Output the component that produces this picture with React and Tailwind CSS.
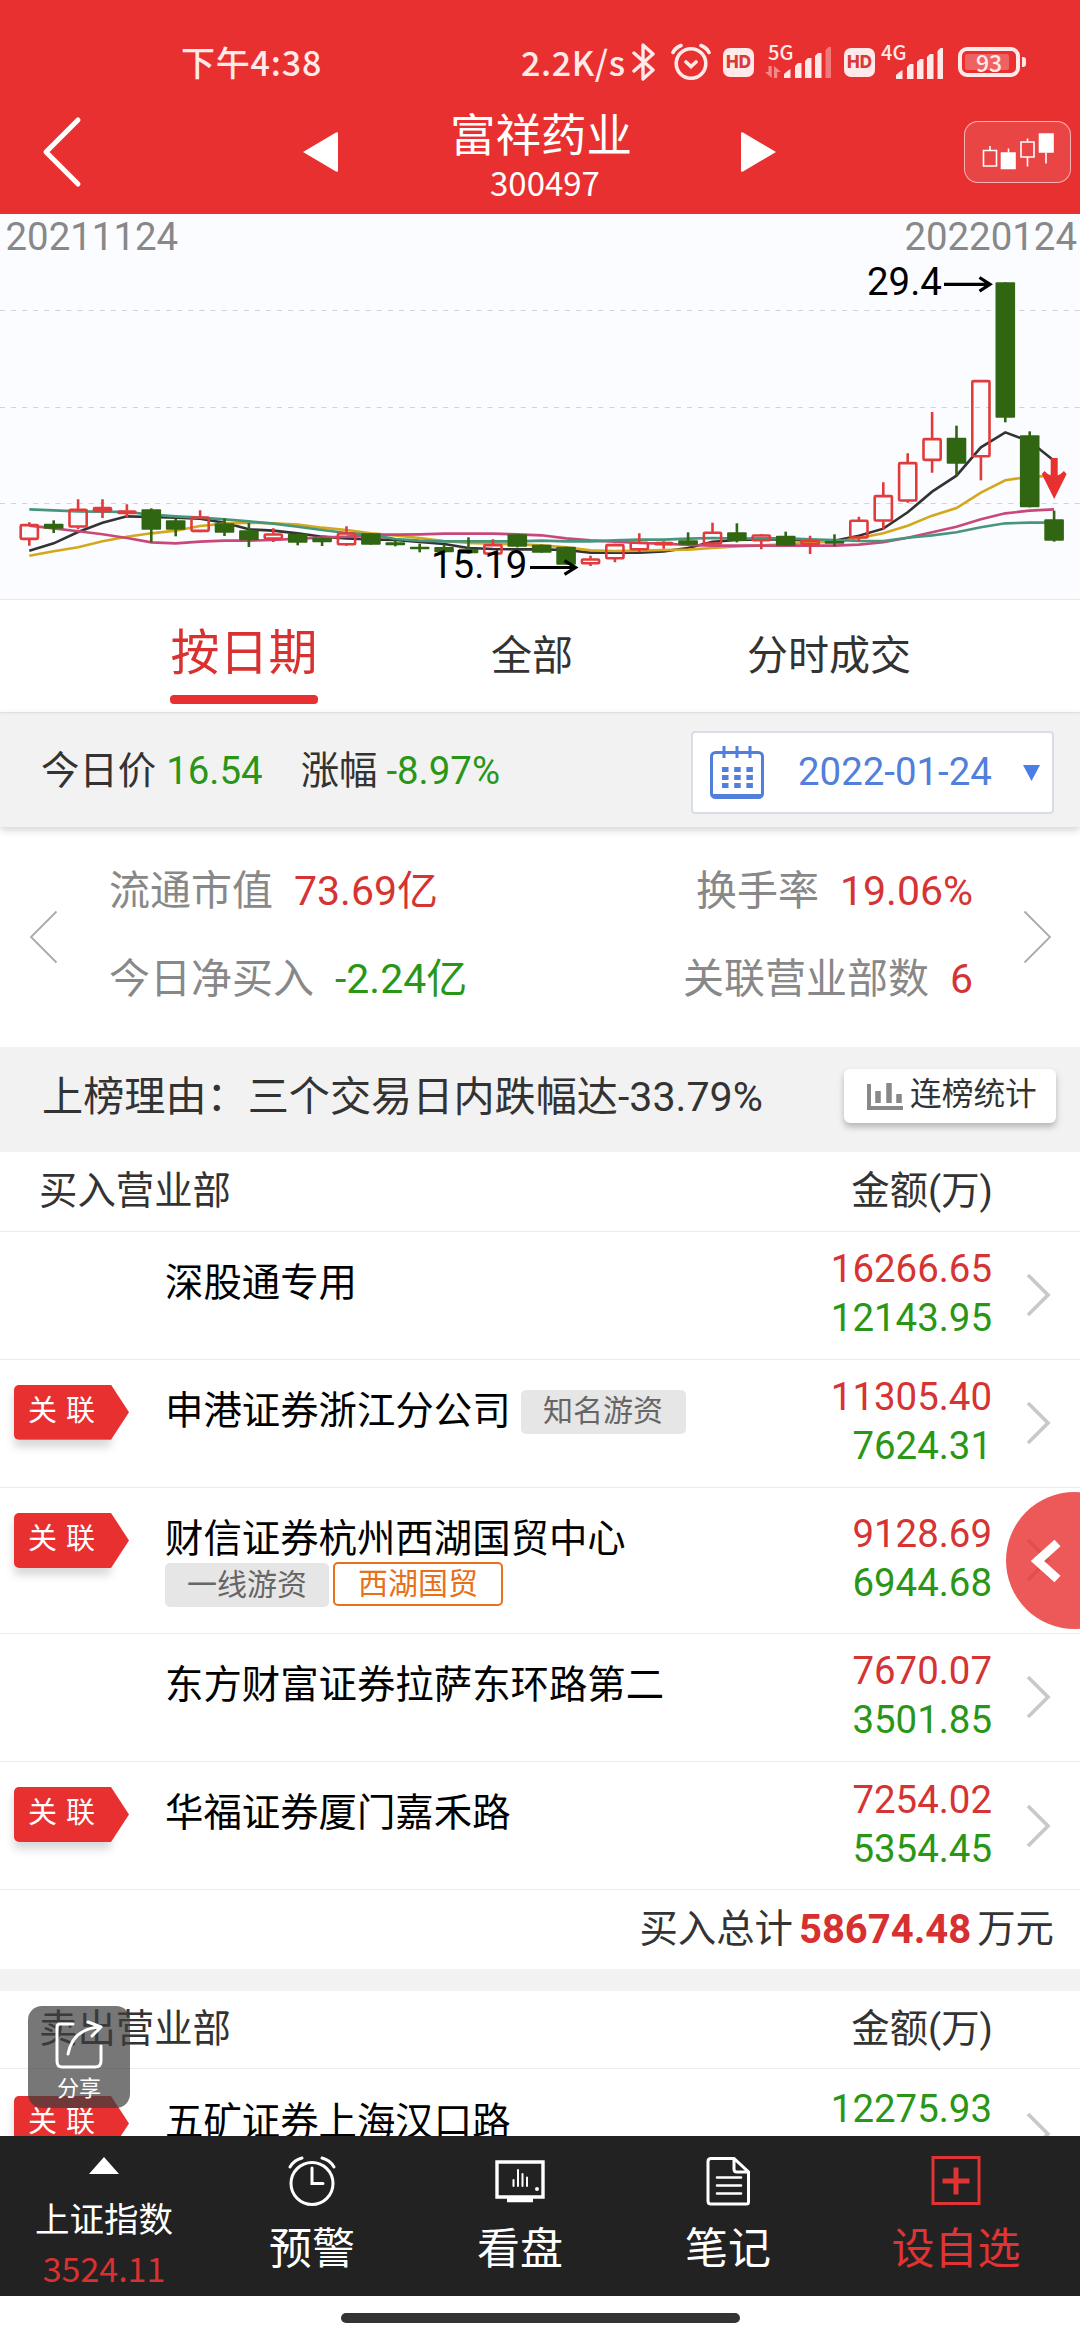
import React from "react";

// [body top, body bottom, high, low, rising]
const candles = [
  [943, 989, 937, 1007, 1], [941, 956, 931, 969, 0], [897, 952, 868, 958, 1], [892, 905, 868, 924, 1],
  [902, 911, 883, 922, 1], [898, 959, 895, 997, 0], [931, 959, 927, 979, 0], [920, 965, 901, 967, 1],
  [940, 968, 925, 978, 0], [961, 991, 939, 1011, 0], [971, 988, 955, 996, 1], [971, 998, 971, 1006, 0],
  [983, 997, 983, 1008, 0], [968, 1005, 949, 1007, 1], [970, 1004, 970, 1004, 0], [997, 1006, 989, 1009, 0],
  [1010, 1018, 1001, 1027, 0], [1011, 1027, 1003, 1029, 0], [1016, 1030, 982, 1031, 0], [1003, 1033, 988, 1035, 1],
  [973, 1010, 973, 1012, 0], [1004, 1028, 1004, 1028, 0], [1010, 1064, 1010, 1064, 0], [1046, 1062, 1037, 1068, 1],
  [1003, 1047, 1001, 1057, 1], [996, 1020, 970, 1027, 1], [997, 1003, 994, 1016, 1], [991, 1004, 967, 1006, 0],
  [966, 1003, 938, 1005, 1], [967, 993, 940, 997, 0], [974, 993, 972, 1018, 1], [977, 1007, 965, 1007, 0],
  [991, 1005, 977, 1032, 1], [993, 1001, 973, 1009, 0], [930, 985, 920, 994, 1], [856, 934, 817, 957, 1],
  [757, 874, 730, 878, 1], [685, 752, 606, 788, 1], [683, 761, 647, 797, 0], [511, 741, 511, 811, 1],
  [217, 623, 217, 637, 0], [676, 892, 664, 892, 0], [928, 992, 902, 995, 0],
];

const averages = [
  { color: "#333333", pts: [1022, 1000, 966, 938, 919, 921, 923, 926, 938, 958, 962, 970, 980, 985, 988, 990, 996, 1002, 1014, 1017, 1018, 1018, 1020, 1028, 1028, 1028, 1024, 1014, 995, 990, 988, 988, 992, 992, 977, 956, 907, 845, 797, 712, 667, 694, 752] },
  { color: "#d4a81c", pts: [1037, 1024, 1012, 994, 980, 970, 962, 948, 941, 938, 940, 944, 953, 960, 970, 976, 984, 993, 999, 1001, 1003, 1006, 1012, 1021, 1023, 1022, 1020, 1019, 1014, 1009, 1006, 1003, 997, 996, 984, 970, 947, 917, 894, 848, 811, 800, 798] },
  { color: "#c9487c", pts: [947, 955, 964, 973, 984, 997, 1000, 995, 992, 992, 990, 986, 983, 980, 975, 974, 973, 971, 971, 971, 973, 976, 985, 991, 995, 999, 1001, 1005, 1007, 1007, 1007, 1007, 1007, 1007, 1004, 997, 983, 967, 950, 928, 910, 902, 898] },
  { color: "#47967c", pts: [898, 901, 904, 905, 906, 914, 919, 923, 928, 934, 941, 950, 960, 969, 974, 987, 992, 994, 994, 994, 994, 992, 994, 994, 991, 989, 989, 986, 984, 986, 985, 985, 988, 990, 993, 993, 983, 976, 967, 952, 940, 938, 938] },
];

const cx = (i) => 29.3 + 24.4 * i;
const cy = (v) => v / 3 - 4;

function Chart() {
  return (
    <svg className="block h-[386px] w-[1080px] shrink-0 bg-[#fbfcff]" viewBox="0 0 1080 386" fontFamily="Roboto, sans-serif" fontSize="38.4">
      {[96.5, 193.5, 289.5].map((y) => (
        <line key={y} x1="0" x2="1080" y1={y} y2={y} stroke="#cfd2d8" strokeWidth="1" strokeDasharray="5 6.08" />
      ))}
      <line x1="0" x2="1080" y1="385.5" y2="385.5" stroke="#e6e8ec" />
      {averages.map((a) => (
        <polyline key={a.color} fill="none" stroke={a.color} strokeWidth="2.6" points={a.pts.map((v, i) => `${cx(i)},${cy(v)}`).join(" ")} />
      ))}
      {candles.map(([t, b, h, l, up], i) =>
        up ? (
          <g key={i} stroke="#e23b3b" fill="none">
            <path strokeWidth="2.6" d={`M${cx(i)} ${cy(h)}V${cy(t)}M${cx(i)} ${cy(b)}V${cy(l)}`} />
            <rect strokeWidth="2.6" rx="1" x={cx(i) - 8.6} width="17.2" y={cy(t) + 0.8} height={Math.max(cy(b) - cy(t) - 1.6, 1)} />
          </g>
        ) : (
          <g key={i} fill="#306612">
            <rect x={cx(i) - 1.3} width="2.6" y={cy(h)} height={cy(l) - cy(h)} />
            <rect rx="1" x={cx(i) - 9.8} width="19.6" y={cy(t)} height={cy(b) - cy(t)} />
          </g>
        )
      )}
      <path fill="#e83030" d="M1050.700 244h7v17.500q3-1 6.200-4.500l2.700 3-12.400 25-12.400-25 2.700-3q3.200 3.500 6.200 4.500z" />
      <g fill="none" stroke="#000" strokeWidth="3.2">
        <path d="M944 70.300H989M979.500 63.500L990 70.300L979.500 77.100" />
        <path d="M530 353.500H575M564.500 346.700L575.500 353.500L564.500 360.300" />
      </g>
      <text x="5.500" y="36" fill="#888">20211124</text>
      <text x="1077" y="36" fill="#888" textAnchor="end">20220124</text>
      <text x="867" y="81">29.4</text>
      <text x="431" y="364">15.19</text>
    </svg>
  );
}

function Signal({ weak }) {
  return (
    <svg className="h-[31px] w-[48px]" viewBox="0 0 48 31" fill="#ffe9e9">
      <path d="M0 31v-4q3-3 6.500-5v9z" />
      <path d="M11 31v-12l3-3h3.500v15z" />
      <path d="M21 31v-17l3-3h3.500v20z" />
      <path d="M31 31v-22l3-3h3.500v25z" />
      <path d="M41.500 31v-28l3-3h2.500v31z" opacity={weak ? 0.4 : 1} />
    </svg>
  );
}

function Hd() {
  return (
    <div className="flex h-[29px] w-[31px] items-center justify-center rounded-[7px] bg-[#ffe9e9] font-['Inter',sans-serif] text-[17px] leading-none font-extrabold text-[#d83a3a]">HD</div>
  );
}

function StatusBar() {
  return (
    <div className="flex h-[110px] items-start pt-[43px] pl-[181px] font-['Noto_Sans_CJK_SC',sans-serif] text-[34px] leading-[38px] font-medium whitespace-nowrap text-[#ffe9e9]">
      <div className="w-[340px] tracking-[0.8px]">下午4:38</div>
      <div className="w-[111px] tracking-[0.6px]">2.2K/s</div>
      <svg className="h-[38px] w-[24px]" viewBox="0 0 24 38" fill="none" stroke="#ffe9e9" strokeWidth="3.4" strokeLinejoin="round" strokeLinecap="round">
        <path d="M2 10L21 27L11 36V2L21 11L2 28" />
      </svg>
      <svg className="ml-[15px] h-[38px] w-[40px]" viewBox="0 0 40 38" fill="none" stroke="#ffe9e9" strokeWidth="3.600" strokeLinecap="round">
        <circle cx="20" cy="20.500" r="14.800" />
        <path d="M2 9.500Q4 5 10 2.500M38 9.500Q36 5 30 2.500M15 19l5 4.500 5-4.500" />
      </svg>
      <div className="mt-[5px] ml-[12px]"><Hd /></div>
      <div className="ml-[11px] flex w-[68px] items-end">
        <div className="w-[19px]">
          <div className="w-[32px] pl-[3px] text-[20px] leading-[18px]">5G</div>
          <svg className="mt-[5px] h-[12px] w-[16px]" viewBox="0 0 16 12" fill="#f58a8a">
            <path d="M3.500 0h3.200v12L0 6h3.500zM9 12h3.200V6H16L9 0z" />
          </svg>
        </div>
        <Signal weak />
      </div>
      <div className="mt-[5px] ml-[11px]"><Hd /></div>
      <div className="ml-[6px] flex w-[64px] items-start">
        <div className="w-[15px]"><div className="w-[32px] text-[20px] leading-[18px]">4G</div></div>
        <div className="mt-[5px]"><Signal /></div>
      </div>
      <div className="mt-[4px] ml-[13px] flex items-center gap-[2px]">
        <div className="h-[30px] w-[62px] rounded-[9px] border-[4px] border-[#ffe9e9] p-[3px]">
          <div className="flex h-[16px] w-[44px] items-center justify-center rounded-[2px] bg-[#ee6262] pl-[4px] text-[23px] leading-none">93</div>
        </div>
        <div className="h-[10px] w-[4px] rounded-r-[3px] bg-[#ffe9e9]" />
      </div>
    </div>
  );
}

function Header() {
  return (
    <div className="h-[214px] shrink-0 bg-[#e83030] text-white">
      <StatusBar />
      <div className="flex h-[84px] items-center">
        <svg className="ml-[42px] h-[72px] w-[42px]" viewBox="0 0 42 72" fill="none" stroke="#fff" strokeWidth="5" strokeLinecap="round" strokeLinejoin="round"><path d="M36 4L4 36L36 68" /></svg>
        <svg className="ml-[219px] h-[40px] w-[35px]" viewBox="0 0 35 40" fill="#fff"><path d="M0 20L33 0.500q2-1 2 1v37q0 2-2 1z" /></svg>
        <div className="ml-[103px] flex w-[208px] flex-col items-center pt-[10px] font-['Noto_Sans_CJK_SC',sans-serif]">
          <div className="pr-[8px] text-[45.500px] leading-[50px]">富祥药业</div>
          <div className="text-[33px] leading-[50px]">300497</div>
        </div>
        <svg className="ml-[92px] h-[40px] w-[35px]" viewBox="0 0 35 40" fill="#fff"><path d="M35 20L2 0.500q-2-1-2 1v37q0 2 2 1z" /></svg>
        <div className="ml-[188px] h-[62px] w-[107px] rounded-[14px] border-[1.5px] border-white/60 bg-white/10">
          <svg className="h-[59px] w-[104px]" viewBox="965.500 122.500 104 59" stroke="#fff" strokeWidth="1.600" fill="none">
            <path d="M984 151h13v15.500h-13zM990.500 151v-4.500M1021.500 142.500h13v15h-13zM1028 142.500v-3.500M1028 157.500v9.500M1009 153v-4M1046.500 153v11" />
            <path fill="#fff" d="M1002 153.500h13.500v15.500h-13.500zM1040 134.500h13.500v18h-13.500z" />
          </svg>
        </div>
      </div>
    </div>
  );
}

function Stat({ label, value, color }) {
  return (
    <div className="flex h-[88px] items-center">
      <span className="mr-[21px] text-[#888]">{label}</span>
      <span className={color}>{value}</span>
    </div>
  );
}

function Badge() {
  return (
    <div className="h-[55px] w-[97px] rounded-[4px] shadow-[0_7px_10px_rgba(0,0,0,0.16)]">
      <div className="flex h-[55px] w-[115px] items-center gap-[9px] rounded-l-[5px] bg-[#e83030] pb-[2px] pl-[14px] text-[29px] leading-none text-white [clip-path:polygon(0_0,97px_0,115px_50%,97px_100%,0_100%)]">
        <span>关</span><span>联</span>
      </div>
    </div>
  );
}

function Chevron() {
  return (
    <svg className="h-[44px] w-[25px]" viewBox="0 0 25 44" fill="none" stroke="#c8c8c8" strokeWidth="3.600"><path d="M2 2L22 22L2 42" /></svg>
  );
}

function Row({ related, name, inline, tags, buy, sell, tall }) {
  return (
    <div className={`flex shrink-0 border-b border-[#ebebeb] ${tall ? "h-[146px]" : "h-[128.2px]"}`}>
      <div className="w-[165px] pt-[25px] pl-[14px]">{related && <Badge />}</div>
      <div className="flex-1 pt-[26px]">
        <div className="flex h-[52px] items-center gap-[10px] whitespace-nowrap text-black">
          <span className="pb-px">{name}</span>
          {inline && <span className="flex h-[44px] w-[165px] items-center justify-center rounded-[5px] bg-[#e6e6e6] pb-[2px] text-[30px] leading-none text-[#666]">{inline}</span>}
        </div>
        {tags && (
          <div className="-mt-[4px] flex gap-[4px] text-[30px] leading-none">
            <span className="mt-px flex h-[44px] w-[164px] items-center justify-center rounded-[5px] bg-[#e6e6e6] text-[#666]">{tags[0]}</span>
            <span className="flex h-[44px] w-[170px] items-center justify-center rounded-[5px] border-2 border-[#e8701a] text-[#e8701a]">{tags[1]}</span>
          </div>
        )}
      </div>
      <div className="flex flex-col justify-center pb-[4px] text-right leading-[49px]">
        <div className="text-[#d63333]">{buy}</div>
        <div className="text-[#2a9618]">{sell}</div>
      </div>
      <div className="flex w-[88px] items-center pl-[34px]"><Chevron /></div>
    </div>
  );
}

function TableHead({ title, h }) {
  return (
    <div className={`flex shrink-0 items-center justify-between border-b border-[#ebebeb] pr-[87px] pb-px pl-[39px] text-[#333] ${h}`}>
      <span>{title}</span>
      <span>金额(万)</span>
    </div>
  );
}

function NavItem({ label, children, color = "text-white", w = "w-[208px]" }) {
  return (
    <div className={`flex flex-col items-center pt-[19px] ${w} ${color}`}>
      <svg className="h-[52px] w-[52px]" viewBox="0 0 52 52" fill="none" stroke="currentColor" strokeWidth="3" strokeLinecap="round">{children}</svg>
      <div className="mt-[12px] text-[43px] leading-[52px]">{label}</div>
    </div>
  );
}

export default function App() {
  return (
    <div className="relative flex h-[2340px] w-[1080px] flex-col overflow-hidden bg-white font-['Roboto','Noto_Sans_CJK_SC',sans-serif] text-[38.4px] leading-none text-[#333]">
      <Header />
      <Chart />

      <div className="flex h-[113px] shrink-0 border-b border-[#e8e8e8] pl-[170px] text-[41px]">
        <div className="flex w-[148px] flex-col items-center whitespace-nowrap">
          <span className="h-[95px] text-[49px] leading-[107px] text-[#d93030]">按日期</span>
          <span className="h-[9px] w-[148px] rounded-[4px] bg-[#e83030]" />
        </div>
        <div className="ml-[173px] leading-[112px]">全部</div>
        <div className="ml-[174px] leading-[112px]">分时成交</div>
      </div>

      <div className="z-10 flex h-[114px] shrink-0 items-center border-t-[2px] border-[#ededed] bg-[#f2f2f2] pr-[26px] pl-[41px] shadow-[0_3px_8px_rgba(0,0,0,0.18)]">
        <span className="mr-[10px]">今日价</span>
        <span className="text-[#2a9618]">16.54</span>
        <span className="mr-[9px] ml-[38px]">涨幅</span>
        <span className="text-[#2a9618]">-8.97%</span>
        <div className="mt-[3px] ml-auto flex h-[83px] w-[363px] items-center rounded-[4px] border-[2px] border-[#d9dee6] bg-white pl-[16px] text-[#527fdb]">
          <svg className="h-[55px] w-[56px]" viewBox="0 0 56 55" fill="none" stroke="currentColor" strokeWidth="3">
            <rect x="2.500" y="7.500" width="51" height="45" rx="4" />
            <path d="M15 1v12M28 1v12M41 1v12M4 50.500h48" />
            <path strokeWidth="5" strokeDasharray="6.500 5.700" d="M13 24.500h31M13 32.500h31M13 40.500h31" />
          </svg>
          <span className="ml-[33px]">2022-01-24</span>
          <svg className="ml-[31px] h-[16px] w-[17px]" viewBox="0 0 17 16" fill="#4a7de6"><path d="M0 0h17L8.500 16z" /></svg>
        </div>
      </div>

      <div className="flex h-[220px] shrink-0 items-start pt-[20px] text-[41px]">
        <svg className="mt-[63px] ml-[29px] h-[54px] w-[29px]" viewBox="0 0 29 54" fill="none" stroke="#aaa" strokeWidth="1.800"><path d="M27.500 1.500L2 27L27.500 52.500" /></svg>
        <div className="ml-[51px] flex-1">
          <Stat label="流通市值" value="73.69亿" color="text-[#d63333]" />
          <Stat label="今日净买入" value="-2.24亿" color="text-[#2a9618]" />
        </div>
        <div className="flex flex-col items-end">
          <Stat label="换手率" value="19.06%" color="text-[#d63333]" />
          <Stat label="关联营业部数" value="6" color="text-[#d63333]" />
        </div>
        <svg className="mt-[63px] mr-[28px] ml-[50px] h-[54px] w-[29px]" viewBox="0 0 29 54" fill="none" stroke="#aaa" strokeWidth="1.800"><path d="M1.500 1.500L27 27L1.500 52.500" /></svg>
      </div>

      <div className="flex h-[105px] shrink-0 items-center justify-between bg-[#f2f2f2] pr-[24px] pb-[7px] pl-[42px]">
        <span className="pt-[3px] text-[41.150px]">上榜理由：三个交易日内跌幅达-33.79%</span>
        <div className="flex h-[54px] w-[212px] items-center rounded-[6px] bg-white pl-[23px] shadow-[0_4px_6px_rgba(0,0,0,0.25)]">
          <svg className="h-[27px] w-[36px]" viewBox="0 0 36 27" fill="none" stroke="#888"><path strokeWidth="4" d="M2 1v24h34" /><path strokeWidth="5.500" d="M11 8v12M22 0v20M32 11v9" /></svg>
          <span className="ml-[7px] pb-[3px] text-[31.700px]">连榜统计</span>
        </div>
      </div>

      <TableHead title="买入营业部" h="h-[79.500px]" />
      <Row name="深股通专用" buy="16266.65" sell="12143.95" />
      <Row related name="申港证券浙江分公司" inline="知名游资" buy="11305.40" sell="7624.31" />
      <Row related tall name="财信证券杭州西湖国贸中心" tags={["一线游资", "西湖国贸"]} buy="9128.69" sell="6944.68" />
      <Row name="东方财富证券拉萨东环路第二" buy="7670.07" sell="3501.85" />
      <Row related name="华福证券厦门嘉禾路" buy="7254.02" sell="5354.45" />

      <div className="flex h-[78.700px] shrink-0 items-center justify-end pr-[26px]">
        <span>买入总计</span>
        <span className="mx-[6px] text-[40px] font-bold text-[#d63030]">58674.48</span>
        <span>万元</span>
      </div>
      <div className="h-[22px] shrink-0 bg-[#f2f2f2]" />
      <TableHead title="卖出营业部" h="h-[78px]" />
      <div className="h-[67px] shrink-0 overflow-hidden pt-[2px]">
        <div className="flex">
          <div className="w-[165px] pt-[25px] pl-[14px]"><Badge /></div>
          <div className="flex-1 pt-[32px] text-black">五矿证券上海汉口路</div>
          <div className="pt-[13px] leading-[49px] text-[#2a9618]">12275.93</div>
          <div className="w-[88px] pt-[41px] pl-[34px]"><Chevron /></div>
        </div>
      </div>

      <div className="z-10 flex h-[160px] shrink-0 bg-[#222] font-['Noto_Sans_CJK_SC',sans-serif]">
        <div className="flex w-[208px] flex-col items-center pt-[21px] text-white">
          <svg className="h-[17px] w-[30px]" viewBox="0 0 30 17" fill="#fff"><path d="M0 17L15 0L30 17z" /></svg>
          <div className="mt-[18px] text-[34.500px] leading-[50px]">上证指数</div>
          <div className="text-[34px] leading-[52px] text-[#d93030]">3524.11</div>
        </div>
        <NavItem label="预警">
          <circle cx="26" cy="28.500" r="21" />
          <path d="M26 13v15.500h11M4 12Q8 5 16 3M48 12Q44 5 36 3" />
        </NavItem>
        <NavItem label="看盘">
          <path strokeLinecap="butt" strokeWidth="3.400" d="M3 7h46v35H3zM26 42v3M13 45.500h26" />
          <path strokeWidth="2" d="M19.500 25v6M24 15v16M28.500 19v12M33 22.500v8.500" />
          <circle cx="43" cy="34" r="1" strokeWidth="2" />
        </NavItem>
        <NavItem label="笔记">
          <path d="M9 3.500h23L46.500 17v30q0 2-2 2H9q-3 0-3-3V6.500q0-3 3-3zM32 4v10q0 3 3 3h11" />
          <path strokeWidth="2.600" d="M15 22.500h24M15 30.500h24M15 38.500h24" />
        </NavItem>
        <NavItem label="设自选" w="w-[248px]" color="text-[#e03333]">
          <path strokeLinecap="butt" d="M3 2.500h46v46H3z" />
          <path strokeLinecap="butt" strokeWidth="5" d="M12.500 26h27M26 12.500v27" />
        </NavItem>
      </div>
      <div className="flex flex-1 justify-center bg-white pt-[17px]">
        <div className="h-[10px] w-[399px] rounded-full bg-[#333]" />
      </div>

      <div className="absolute top-[1492px] left-[1006px] flex h-[137px] w-[137px] items-center rounded-full bg-[#e83030]/80 pl-[23px]">
        <svg className="h-[46px] w-[34px]" viewBox="0 0 34 46" fill="none" stroke="#fff" strokeWidth="9"><path d="M28.500 5L8.500 23L28.500 41" /></svg>
      </div>
      <div className="absolute top-[2006px] left-[28px] flex h-[102px] w-[102px] flex-col items-center rounded-[14px] bg-[#3d3d3d]/70 pt-[12px] text-white">
        <svg className="h-[52px] w-[52px]" viewBox="0 0 52 52" fill="none" stroke="#fff" strokeWidth="3" strokeLinecap="round" strokeLinejoin="round">
          <path d="M20 6H7Q4 6 4 9V43Q4 49 9 49H42Q48 49 48 43V28M15 36Q20 10 48 9M35 4L48 9L39 18" />
        </svg>
        <div className="mt-[8px] text-[22px]">分享</div>
      </div>
    </div>
  );
}
